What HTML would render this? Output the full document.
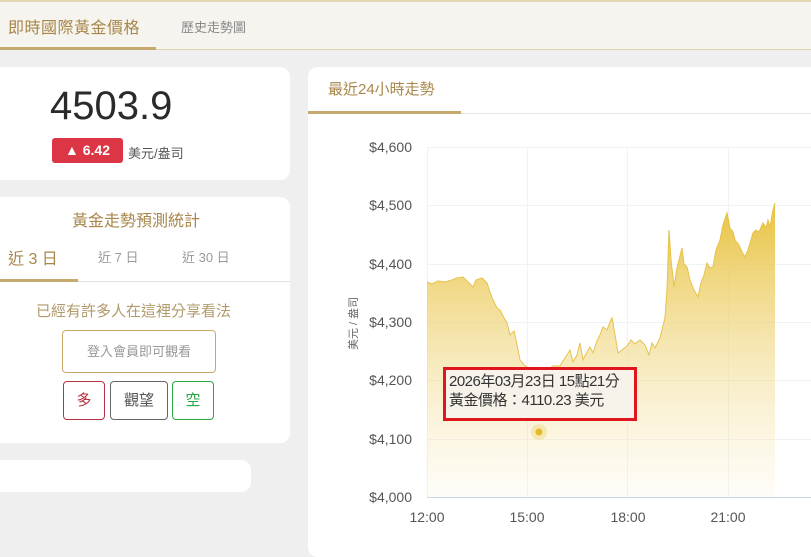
<!DOCTYPE html>
<html><head><meta charset="utf-8"><style>
*{margin:0;padding:0;box-sizing:border-box}
body{width:811px;height:539px;overflow:hidden;background:#efefef;font-family:"Liberation Sans","Noto Sans CJK TC",sans-serif;position:relative}
.nav{position:absolute;left:0;top:0;width:811px;height:50px;background:#f6f4ef;border-top:2px solid #e6d7b4;border-bottom:1px solid #e3d3ad}
.t1{position:absolute;left:8px;top:12px;font-size:16px;color:#a8864a;letter-spacing:0.5px}
.t1u{position:absolute;left:0;top:45px;width:156px;height:3px;background:#c5a96d}
.t2{position:absolute;left:181px;top:15px;font-size:13px;color:#888}
.card{position:absolute;background:#fff;border-radius:10px}
.abs{position:absolute}
</style></head><body>
<div class="nav"><div class="t1">即時國際黃金價格</div><div class="t1u"></div><div class="t2">歷史走勢圖</div></div>

<div class="card" style="left:-12px;top:67px;width:302px;height:113px"></div>
<div class="abs" style="left:50px;top:84px;font-size:40px;color:#2a2a2a">4503.9</div>
<div class="abs" style="left:52px;top:138px;width:71px;height:25px;background:#dc3545;border-radius:3px;color:#fff;font-weight:bold;font-size:14px;line-height:25px;text-align:center">▲ 6.42</div>
<div class="abs" style="left:128px;top:143px;font-size:13px;color:#555">美元/盎司</div>

<div class="card" style="left:-12px;top:197px;width:302px;height:246px"></div>
<div class="abs" style="left:72px;top:207px;font-size:16px;color:#a8864a">黃金走勢預測統計</div>
<div class="abs" style="left:8px;top:245px;font-size:16px;color:#a8864a">近 3 日</div>
<div class="abs" style="left:98px;top:247px;font-size:13px;color:#999">近 7 日</div>
<div class="abs" style="left:182px;top:247px;font-size:13px;color:#999">近 30 日</div>
<div class="abs" style="left:0;top:281px;width:290px;height:1px;background:#e3e3e3"></div>
<div class="abs" style="left:0;top:279px;width:78px;height:3px;background:#c5a96d"></div>
<div class="abs" style="left:36px;top:300px;font-size:15px;color:#b29a6a">已經有許多人在這裡分享看法</div>
<div class="abs" style="left:62px;top:330px;width:154px;height:43px;border:1px solid #c8a96a;border-radius:4px;color:#999;font-size:13px;text-align:center;line-height:41px">登入會員即可觀看</div>
<div class="abs" style="left:63px;top:381px;width:42px;height:39px;border:1px solid #b8323f;border-radius:4px;color:#b8323f;font-size:15px;text-align:center;line-height:37px">多</div>
<div class="abs" style="left:110px;top:381px;width:58px;height:39px;border:1px solid #666;border-radius:4px;color:#555;font-size:15px;text-align:center;line-height:37px">觀望</div>
<div class="abs" style="left:172px;top:381px;width:42px;height:39px;border:1px solid #28a745;border-radius:4px;color:#28a745;font-size:15px;text-align:center;line-height:37px">空</div>

<div class="card" style="left:-12px;top:460px;width:263px;height:32px"></div>

<div class="card" style="left:308px;top:67px;width:520px;height:490px"></div>
<div class="abs" style="left:328px;top:78px;font-size:15px;color:#a8864a">最近24小時走勢</div>
<div class="abs" style="left:308px;top:113px;width:503px;height:1px;background:#e6e6e6"></div>
<div class="abs" style="left:308px;top:111px;width:153px;height:3px;background:#c5a96d"></div>

<svg class="abs" style="left:0;top:0" width="811" height="539">
<defs><linearGradient id="g" x1="0" y1="0" x2="0" y2="1"><stop offset="0" stop-color="#e8c23f" stop-opacity="1"/><stop offset="1" stop-color="#f6e6b0" stop-opacity="0.1"/></linearGradient></defs>
<g stroke="#f1f2f5" stroke-width="1">
<line x1="427" y1="147.5" x2="811" y2="147.5"/><line x1="427" y1="205.5" x2="811" y2="205.5"/><line x1="427" y1="264.5" x2="811" y2="264.5"/><line x1="427" y1="322.5" x2="811" y2="322.5"/><line x1="427" y1="380.5" x2="811" y2="380.5"/><line x1="427" y1="439.5" x2="811" y2="439.5"/>
<line x1="527.5" y1="147" x2="527.5" y2="497"/><line x1="627.5" y1="147" x2="627.5" y2="497"/><line x1="728.5" y1="147" x2="728.5" y2="497"/><line x1="427.5" y1="147" x2="427.5" y2="497"/>
</g>
<path id="p" d="M427,282 L432,284 438,281 445,282 452,280 457,278 463,277 468,282 473,287 476,280 482,278 487,283 490,292 493,300 497,308 500,310 503,316 507,323 510,335 514,331 517,345 520,360 524,365 527,367 531,370 535,372 539,382 543,372 547,370 553,366 560,366 563,361 567,355 570,350 573,362 577,355 580,343 583,360 587,352 590,347 593,353 597,341 600,335 603,327 607,330 610,322 612,318 615,335 618,353 622,350 627,346 631,340 635,344 640,340 645,345 649,355 652,343 655,348 660,338 662,330 665,318 667,290 669,230 671,260 674,287 677,268 680,256 682,248 684,264 687,267 690,280 694,290 698,297 701,283 704,275 707,263 710,268 713,267 716,250 720,240 723,225 727,213 730,228 733,232 735,240 739,245 742,252 745,257 748,250 751,240 753,233 756,230 759,232 763,223 766,228 768,220 770,227 773,210 775,203" fill="none" stroke="#e2bb3a" stroke-width="1"/>
<path d="M427,282 L432,284 438,281 445,282 452,280 457,278 463,277 468,282 473,287 476,280 482,278 487,283 490,292 493,300 497,308 500,310 503,316 507,323 510,335 514,331 517,345 520,360 524,365 527,367 531,370 535,372 539,382 543,372 547,370 553,366 560,366 563,361 567,355 570,350 573,362 577,355 580,343 583,360 587,352 590,347 593,353 597,341 600,335 603,327 607,330 610,322 612,318 615,335 618,353 622,350 627,346 631,340 635,344 640,340 645,345 649,355 652,343 655,348 660,338 662,330 665,318 667,290 669,230 671,260 674,287 677,268 680,256 682,248 684,264 687,267 690,280 694,290 698,297 701,283 704,275 707,263 710,268 713,267 716,250 720,240 723,225 727,213 730,228 733,232 735,240 739,245 742,252 745,257 748,250 751,240 753,233 756,230 759,232 763,223 766,228 768,220 770,227 773,210 775,203 L775,497 L427,497 Z" fill="url(#g)" stroke="none"/>
<line x1="427" y1="497.5" x2="811" y2="497.5" stroke="#ccd6eb"/>
<circle cx="539" cy="432" r="8" fill="#f2dd94" opacity="0.6"/><circle cx="539" cy="432" r="3.5" fill="#e2bb2a"/>
<g font-family="Liberation Sans,sans-serif" font-size="14" fill="#555" text-anchor="end">
<text x="412" y="152">$4,600</text><text x="412" y="210">$4,500</text><text x="412" y="269">$4,400</text><text x="412" y="327">$4,300</text><text x="412" y="385">$4,200</text><text x="412" y="444">$4,100</text><text x="412" y="502">$4,000</text>
</g>
<g font-family="Liberation Sans,sans-serif" font-size="14" fill="#555" text-anchor="middle">
<text x="427" y="522">12:00</text><text x="527" y="522">15:00</text><text x="628" y="522">18:00</text><text x="728" y="522">21:00</text>
</g>
<text transform="translate(357,350) rotate(-90)" font-family="Liberation Sans,Noto Sans CJK TC,sans-serif" font-size="11" fill="#666">美元 / 盎司</text>
</svg>
<div class="abs" style="left:443px;top:367px;width:194px;height:54px;background:#f7f3ea;border:3px solid #e0161e;font-size:15px;color:#333;padding:2px 0 0 3px;line-height:19px;white-space:nowrap;letter-spacing:-0.5px">2026年03月23日 15點21分<br>黃金價格：4110.23 美元</div>
</body></html>
